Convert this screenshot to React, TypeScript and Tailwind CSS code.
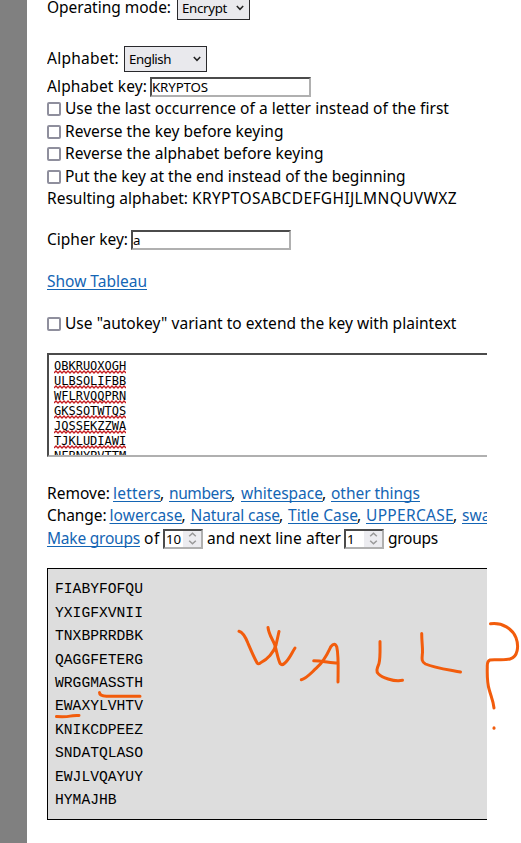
import { useLayoutEffect, useRef } from "react";
import type { ReactNode } from "react";

/** Text run that spreads its letters evenly over the width given by its class. */
function Run({ text, className = "", inner = "" }: { text: string; className?: string; inner?: string }) {
  const box = useRef<HTMLSpanElement>(null);
  const run = useRef<HTMLSpanElement>(null);
  useLayoutEffect(() => {
    if (!box.current || !run.current) return;
    run.current.style.letterSpacing = "0px";
    const natural = run.current.getBoundingClientRect().width;
    const room = box.current.getBoundingClientRect().width;
    run.current.style.letterSpacing = `${(room - natural) / text.length}px`;
  }, [text]);
  return (
    <span ref={box} className={`block h-[22px] shrink-0 whitespace-pre leading-[20px] ${className}`}>
      <span ref={run} className={`inline-block ${inner}`}>{text}</span>
    </span>
  );
}

function Link({ text, className }: { text: string; className: string }) {
  return (
    <a href="#" className="flex shrink-0 text-[#1465b4]">
      <Run text={text} className={className} inner="underline decoration-1 underline-offset-[2px] [text-decoration-skip-ink:none]" />
    </a>
  );
}

function Comma({ className = "w-[10px]" }: { className?: string }) {
  return <span className={`-ml-px h-[22px] shrink-0 leading-[20px] ${className}`}>,</span>;
}

function Chevron() {
  return (
    <svg className="h-[6px] w-[8px] shrink-0" viewBox="0 0 8 6" fill="none" stroke="#222" strokeWidth="1.5">
      <path d="M.8 1 4 4.3 7.2 1" />
    </svg>
  );
}

function Select({ children, className }: { children: ReactNode; className: string }) {
  return (
    <div className={`flex shrink-0 items-center justify-between border border-[#29292c] bg-[#e9e9ed] pr-[5px] pl-[4px] text-[13.3px] ${className}`}>
      {children}
      <Chevron />
    </div>
  );
}

const inset = "border-2 border-t-[#4b4b4b] border-l-[#4b4b4b] border-r-[#b0b0b0] border-b-[#b0b0b0] bg-white";

function Field({ children, className }: { children: ReactNode; className: string }) {
  return <div className={`flex h-5 shrink-0 items-center text-[13.3px] ${inset} ${className}`}>{children}</div>;
}

function Spinner({ value, className }: { value: string; className: string }) {
  return (
    <div className={`flex h-5 w-10 shrink-0 items-center justify-between pl-px text-[13.3px] ${inset} ${className}`}>
      {value}
      <span className="flex h-full w-[18px] items-center justify-center bg-[#ececf0]">
        <svg className="h-[13px] w-[9px]" viewBox="0 0 9 13" fill="none" stroke="#999" strokeWidth="1.5">
          <path d="M1.200 4.300 4.500 1.200 7.800 4.300M1.200 8.700l3.300 3.100 3.300-3.100" />
        </svg>
      </span>
    </div>
  );
}

function Check({ text, className }: { text: string; className: string }) {
  return (
    <label className="flex h-[22.4px] items-center">
      <span className="mr-1 h-[14px] w-[14px] shrink-0 rounded-[2px] border-2 border-[#8f8f9d] bg-white" />
      <Run text={text} className={className} />
    </label>
  );
}

const plain = ["OBKRUOXOGH", "ULBSOLIFBB", "WFLRVQQPRN", "GKSSOTWTQS", "JQSSEKZZWA", "TJKLUDIAWI", "NFBNYPVTTM"];
const output = ["FIABYFOFQU", "YXIGFXVNII", "TNXBPRRDBK", "QAGGFETERG", "WRGGMASSTH", "EWAXYLVHTV", "KNIKCDPEEZ", "SNDATQLASO", "EWJLVQAYUY", "HYMAJHB"];
const wave = "M0 3" + Array.from({ length: 18 }, () => "l2 -2l2 2").join("");

export default function App() {
  return (
    <div className="relative flex h-[843px] w-[521px] overflow-hidden bg-white font-['Noto_Sans','Open_Sans',sans-serif] text-[15.5px] leading-[22px] text-black">
      <aside className="w-[27px] shrink-0 bg-[#808080]" />
      <main className="ml-5 w-[440px] shrink-0 overflow-hidden">
        <div className="flex h-5 items-end">
          <Run text="Operating mode:" className="mr-[6px] mb-px w-[124px]" />
          <Select className="h-6 w-[73px]"><Run text="Encrypt" className="mt-[2px] w-[45px]" /></Select>
        </div>
        <div className="mt-[26px] flex h-[26px] items-center">
          <Run text="Alphabet:" className="mr-[5px] w-[72px]" />
          <Select className="h-[26px] w-[83px]"><Run text="English" className="mt-[2px] w-[42px]" /></Select>
        </div>
        <div className="mt-[5px] flex h-5 items-center">
          <Run text="Alphabet key:" className="mr-[3px] w-[100px]" />
          <Field className="w-[161px]"><Run text="KRYPTOS" className="mt-[2px] w-[56px]" /></Field>
        </div>
        <div className="mt-[1.2px]">
          <Check text="Use the last occurrence of a letter instead of the first" className="w-[384px]" />
          <Check text="Reverse the key before keying" className="w-[218.5px]" />
          <Check text="Reverse the alphabet before keying" className="w-[258.5px]" />
          <Check text="Put the key at the end instead of the beginning" className="w-[340.5px]" />
          <div className="flex h-[22.4px] items-center">
            <Run text="Resulting alphabet:" className="mr-[4px] w-[141px]" />
            <Run text="KRYPTOSABCDEFGHIJLMNQUVWXZ" className="w-[265px]" />
          </div>
        </div>
        <div className="mt-[19.8px] flex h-5 items-center">
          <Run text="Cipher key:" className="mr-[3px] w-[81px]" />
          <Field className="w-[160px]">a</Field>
        </div>
        <div className="mt-[21px] flex h-[22px] items-center"><Link text="Show Tableau" className="w-[100px]" /></div>
        <div className="mt-5"><Check text={'Use "autokey" variant to extend the key with plaintext'} className="w-[391.5px]" /></div>
        <div className="mt-[17.6px] h-[104px] w-[470px] overflow-hidden border-2 border-t-[#4b4b4b] border-r-[#b0b0b0] border-b-[#b0b0b0] border-l-[#4b4b4b] pt-[4px] pl-[5px] font-['DejaVu_Sans_Mono',monospace] text-[12px] leading-[15px]">
          {plain.map((line) => (
            <div key={line} className="relative h-[15px]">
              {line}
              <svg className="absolute top-[11px] left-0 h-1 w-[72px]" viewBox="0 0 72 4" fill="none" stroke="#c41c20" strokeWidth="1.3">
                <path d={wave} />
              </svg>
            </div>
          ))}
        </div>
        <div className="mt-[26px] flex h-[22px] items-center">
          <Run text="Remove:" className="mr-[3px] w-[63px]" />
          <Link text="letters" className="w-[48px]" /><Comma className="w-[9px]" />
          <Link text="numbers" className="w-[63px]" /><Comma />
          <Link text="whitespace" className="w-[82px]" /><Comma className="w-[9px]" />
          <Link text="other things" className="w-[89px]" />
        </div>
        <div className="flex h-[22px] items-center">
          <Run text="Change:" className="mr-[3px] w-[59.5px]" />
          <Link text="lowercase" className="w-[73px]" /><Comma className="w-[9px]" />
          <Link text="Natural case" className="w-[89.5px]" /><Comma className="w-[9px]" />
          <Link text="Title Case" className="w-[70px]" /><Comma className="w-[9px]" />
          <Link text="UPPERCASE" className="w-[88px]" /><Comma className="w-[9px]" />
          <Link text="swap case" className="w-[75px]" />
        </div>
        <div className="mt-px flex h-[22px] items-center">
          <Link text="Make groups" className="w-[93px]" />
          <Run text="of" className="ml-[4px] w-[16px]" />
          <Spinner value="10" className="ml-[3px]" />
          <Run text="and next line after" className="ml-[4px] w-[134px]" />
          <Spinner value="1" className="ml-[3px]" />
          <Run text="groups" className="ml-[4px] w-[50px]" />
        </div>
        <pre className="mt-[18px] h-[252px] w-[470px] border border-black bg-[#dddddd] pt-[9.5px] pl-[7px] font-['Liberation_Mono',monospace] text-[14.67px] leading-[23.4px]">
          {output.join("\n")}
        </pre>
      </main>
      <svg className="absolute top-0 left-0 h-[843px] w-[521px]" viewBox="0 0 521 843" fill="none" stroke="#f25c0c" strokeWidth="3" strokeLinecap="round" strokeLinejoin="round">
        <path d="M239 631.3c4 1 7 7 9 12 3 7 6 14 9 19.500q1.500 2 4-.3c6-3 13-10 15-17.500l3-13.500" />
        <path d="M268 627.500c1 8 5 12 7 18 2 7 3 14 5.300 18.300q1.700 1.700 4-.3c5-4 7-10 10.700-15.500" />
        <path d="M301.300 679.700c5-1 10-7 15-11.500 8-7 11-14 14.500-21.500q4-5 6 .3c2 9 1.300 23 1.200 35" />
        <path d="M313.700 660.700c8 0 16 2 24 2.400" />
        <path d="M380 641.500c0 8 .5 16-1 22-2 5-3.300 8-.5 10.500 4 4 15 7 20 6.800l4-.5" />
        <path d="M421.700 633.500c0 8 1 13 .8 19-.5 6-1.500 9 3 11.500 9 4 25 6 35 8" />
        <path d="M490.500 623.800c12-1.500 22 5 25.500 14 3 8 2 19-6 21.200-6 1.800-15 .2-20 1q-3 1-2.700 7c-.3 10 .2 17 2 23 2 7 4 11 4.700 18" />
        <path d="M494 728.300v-.5" />
        <path d="M99.500 692.500c0 2 3 3.500 7 3.700 10 .3 22 0 33.500 0" />
        <path d="M56.500 716.600c5 .2 10 .4 13.500-.5 3-.8 5-.6 9-.7" />
      </svg>
    </div>
  );
}
